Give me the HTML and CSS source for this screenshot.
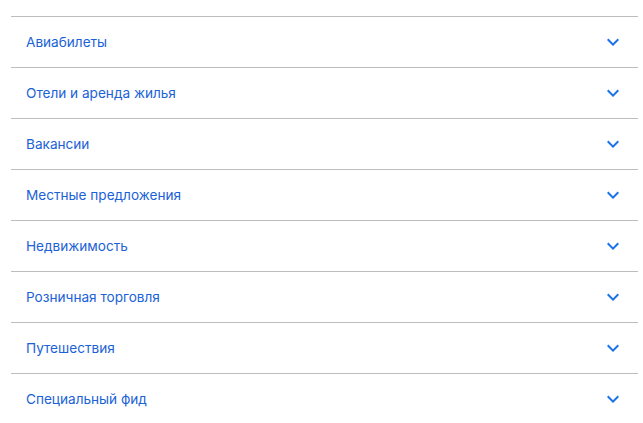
FILE: index.html
```html
<!doctype html>
<html>
<head>
<meta charset="utf-8">
<title>Категории</title>
<link rel="stylesheet" href="styles.css">
</head>
<body>
<div class="acc">
    <div class="item"><span class="title">Авиабилеты</span><svg class="chev" viewBox="0 0 24 24"><path d="M16.59 8.59L12 13.17 7.41 8.59 6 10l6 6 6-6z"/></svg></div>
    <div class="item"><span class="title">Отели и аренда жилья</span><svg class="chev" viewBox="0 0 24 24"><path d="M16.59 8.59L12 13.17 7.41 8.59 6 10l6 6 6-6z"/></svg></div>
    <div class="item"><span class="title">Вакансии</span><svg class="chev" viewBox="0 0 24 24"><path d="M16.59 8.59L12 13.17 7.41 8.59 6 10l6 6 6-6z"/></svg></div>
    <div class="item"><span class="title">Местные предложения</span><svg class="chev" viewBox="0 0 24 24"><path d="M16.59 8.59L12 13.17 7.41 8.59 6 10l6 6 6-6z"/></svg></div>
    <div class="item"><span class="title">Недвижимость</span><svg class="chev" viewBox="0 0 24 24"><path d="M16.59 8.59L12 13.17 7.41 8.59 6 10l6 6 6-6z"/></svg></div>
    <div class="item"><span class="title">Розничная торговля</span><svg class="chev" viewBox="0 0 24 24"><path d="M16.59 8.59L12 13.17 7.41 8.59 6 10l6 6 6-6z"/></svg></div>
    <div class="item"><span class="title">Путешествия</span><svg class="chev" viewBox="0 0 24 24"><path d="M16.59 8.59L12 13.17 7.41 8.59 6 10l6 6 6-6z"/></svg></div>
    <div class="item"><span class="title">Специальный фид</span><svg class="chev" viewBox="0 0 24 24"><path d="M16.59 8.59L12 13.17 7.41 8.59 6 10l6 6 6-6z"/></svg></div>
</div>
</body>
</html>
```

FILE: styles.css
```css
body{margin:0;background:#fff;font:13.6px/20px Inter,sans-serif;}
.acc{margin:16px 5px 0 11px;}
.acc .item{display:flex;align-items:center;justify-content:space-between;height:50px;border-top:1px solid #bdbdbd;padding:0 13px 0 15px;cursor:pointer;}
.acc .title{color:#1a62d6;margin-top:-1px;}
.acc .chev{width:24px;height:24px;fill:#1a73e8;}
```
